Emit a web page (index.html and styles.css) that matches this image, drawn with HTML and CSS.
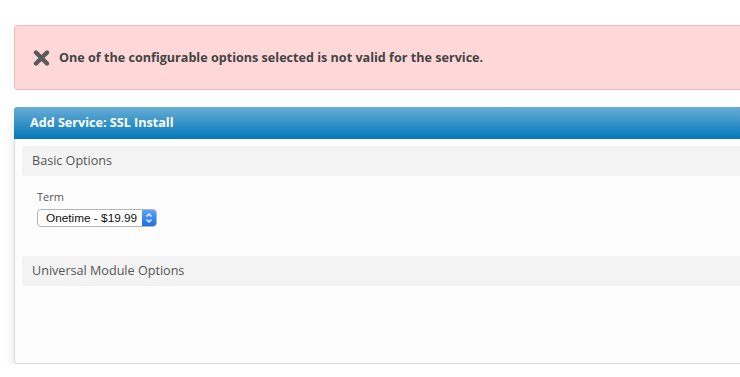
FILE: index.html
```html
<!doctype html>
<html lang="en">
<head>
    <meta charset="UTF-8">
    <meta content="width=device-width, initial-scale=1" name="viewport">
    <title>Add Service</title>
    <link rel="stylesheet" href="styles.css">
</head>
<body>
<div class="page">
    <div class="alert-error">
        <svg class="alert-icon" width="17" height="16" viewBox="0 0 17 16">
            <path d="M3 2.5 L14 13.5 M14 2.5 L3 13.5" stroke="#5a5a5a" stroke-width="4.4" stroke-linecap="round"/>
        </svg>
        <span>One of the configurable options selected is not valid for the service.</span>
    </div>

    <div class="panel">
        <div class="panel-heading">Add Service: SSL Install</div>
        <div class="panel-body">
            <div class="section-title">Basic Options</div>
            <div class="field">
                <label class="field-label">Term</label>
                <div class="select-box">
                    <span class="select-value">Onetime - $19.99</span>
                    <span class="select-stepper">
                        <svg width="8" height="12" viewBox="0 0 8 12">
                            <path d="M1.5 4.5 L4 2 L6.5 4.5 M1.5 7.5 L4 10 L6.5 7.5" fill="none" stroke="#fff" stroke-width="1.3"/>
                        </svg>
                    </span>
                </div>
            </div>
            <div class="section-title">Universal Module Options</div>
            <div class="section-empty"></div>
        </div>
    </div>
</div>
</body>
</html>
```

FILE: styles.css
```css
html, body {
    margin: 0;
    padding: 0;
    background: #fff;
    overflow: hidden;
}

body {
    font-family: "Open Sans", "Liberation Sans", sans-serif;
    color: #555;
}

.page {
    width: 800px;
    padding: 25px 0 0 14px;
}

.alert-error {
    display: flex;
    align-items: center;
    height: 63px;
    padding-left: 18px;
    background: #fed8d8;
    border: 1px solid #f2b8b8;
    border-radius: 3px;
    color: #444;
    font-size: 12.6px;
    font-weight: 700;
}

.alert-icon {
    margin-right: 9px;
    flex: none;
}

.panel {
    margin-top: 17px;
    border: 1px solid #dcdcdc;
    border-radius: 3px;
    background: #fdfdfd;
    box-shadow: 0 9px 12px -3px rgba(0, 0, 0, 0.2);
}

.panel-heading {
    height: 32px;
    line-height: 31px;
    padding-left: 16px;
    margin: -1px -1px 0;
    border-radius: 3px 3px 0 0;
    background: linear-gradient(to bottom, #68aed5, #0277b8);
    color: #fff;
    font-size: 12.6px;
    font-weight: 700;
}

.panel-body {
    padding: 7px 0 0 7px;
}

.section-title {
    height: 30px;
    line-height: 30px;
    padding-left: 10px;
    background: #f3f3f3;
    border-radius: 3px 0 0 3px;
    font-size: 12.6px;
    color: #555;
}

.field {
    padding: 13px 0 29px 15px;
}

.field-label {
    display: block;
    font-size: 11px;
    line-height: 15px;
    color: #555;
    margin-bottom: 5px;
}

.select-box {
    display: flex;
    width: 120px;
    height: 18px;
    box-sizing: border-box;
    border: 1px solid #b5b5b5;
    border-radius: 4px;
    background: #fff;
    overflow: hidden;
}

.select-value {
    flex: 1;
    padding-left: 8px;
    font-family: "Liberation Sans", Arial, sans-serif;
    font-size: 11.8px;
    line-height: 16px;
    color: #111;
}

.select-stepper {
    display: flex;
    align-items: center;
    justify-content: center;
    width: 14px;
    background: linear-gradient(to bottom, #5aa5f8, #1a6fe8);
}

.section-empty {
    height: 77px;
}
```
